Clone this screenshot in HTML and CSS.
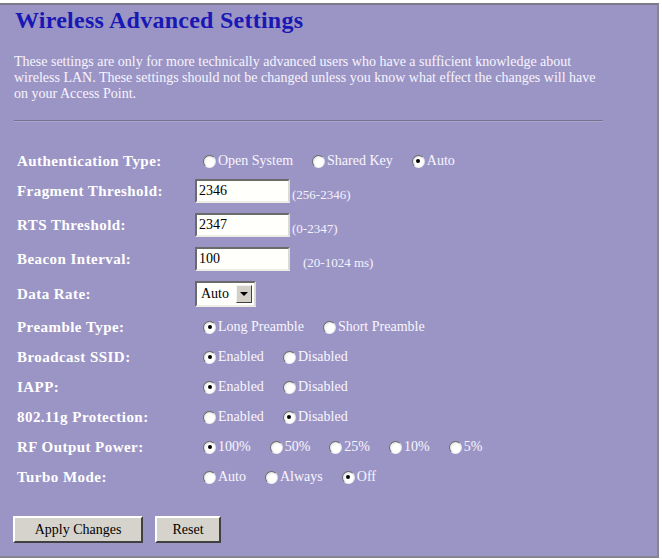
FILE: index.html
```html
<!DOCTYPE html>
<html>
<head>
<meta charset="utf-8">
<link rel="stylesheet" href="styles.css">
</head>
<body>
<div class="panel">
  <h1 class="title">Wireless Advanced Settings</h1>
  <p class="intro">These settings are only for more technically advanced users who have a sufficient knowledge about<br>wireless LAN. These settings should not be changed unless you know what effect the changes will have<br>on your Access Point.</p>
  <hr class="rule">
  <div class="form">
    <div class="row r-auth">
      <div class="label">Authentication Type:</div>
      <div class="value radios">
        <span class="opt"><span class="radio"></span>Open System</span>
        <span class="opt"><span class="radio"></span>Shared Key</span>
        <span class="opt"><span class="radio on"></span>Auto</span>
      </div>
    </div>
    <div class="row r-input">
      <div class="label">Fragment Threshold:</div>
      <div class="value inputs"><span class="field">2346</span><span class="hint">(256-2346)</span></div>
    </div>
    <div class="row r-input">
      <div class="label">RTS Threshold:</div>
      <div class="value inputs"><span class="field">2347</span><span class="hint">(0-2347)</span></div>
    </div>
    <div class="row r-input">
      <div class="label">Beacon Interval:</div>
      <div class="value inputs"><span class="field">100</span><span class="hint spaced">(20-1024 ms)</span></div>
    </div>
    <div class="row r-select">
      <div class="label">Data Rate:</div>
      <div class="value"><span class="select"><span class="sel-text">Auto</span><span class="sel-btn"><span class="arrow"></span></span></span></div>
    </div>
    <div class="row">
      <div class="label">Preamble Type:</div>
      <div class="value radios">
        <span class="opt"><span class="radio on"></span>Long Preamble</span>
        <span class="opt"><span class="radio"></span>Short Preamble</span>
      </div>
    </div>
    <div class="row">
      <div class="label">Broadcast SSID:</div>
      <div class="value radios">
        <span class="opt"><span class="radio on"></span>Enabled</span>
        <span class="opt"><span class="radio"></span>Disabled</span>
      </div>
    </div>
    <div class="row">
      <div class="label">IAPP:</div>
      <div class="value radios">
        <span class="opt"><span class="radio on"></span>Enabled</span>
        <span class="opt"><span class="radio"></span>Disabled</span>
      </div>
    </div>
    <div class="row">
      <div class="label">802.11g Protection:</div>
      <div class="value radios">
        <span class="opt"><span class="radio"></span>Enabled</span>
        <span class="opt"><span class="radio on"></span>Disabled</span>
      </div>
    </div>
    <div class="row">
      <div class="label">RF Output Power:</div>
      <div class="value radios">
        <span class="opt"><span class="radio on"></span>100%</span>
        <span class="opt"><span class="radio"></span>50%</span>
        <span class="opt"><span class="radio"></span>25%</span>
        <span class="opt"><span class="radio"></span>10%</span>
        <span class="opt"><span class="radio"></span>5%</span>
      </div>
    </div>
    <div class="row">
      <div class="label">Turbo Mode:</div>
      <div class="value radios">
        <span class="opt"><span class="radio"></span>Auto</span>
        <span class="opt"><span class="radio"></span>Always</span>
        <span class="opt"><span class="radio on"></span>Off</span>
      </div>
    </div>
  </div>
  <div class="buttons">
    <span class="btn apply">Apply Changes</span>
    <span class="btn reset">Reset</span>
  </div>
</div>
</body>
</html>
```
FILE: styles.css
```css
html, body {
  margin: 0;
  padding: 0;
  background: #ffffff;
}
body {
  font-family: "Liberation Serif", "Times New Roman", serif;
}
.panel {
  margin-top: 3px;
  width: 643px;
  height: 551px;
  padding-left: 14px;
  background: #9b95c5;
  border-top: 2px solid #7c7a86;
  border-right: 2px solid #86848e;
  border-bottom: 2px solid #86848e;
}
.title {
  margin: 1px 0 0 1px;
  font-size: 24px;
  line-height: 28px;
  font-weight: bold;
  letter-spacing: 0.25px;
  color: #1a18b4;
}
.intro {
  margin: 20px 0 0 0;
  font-size: 14px;
  line-height: 16px;
  color: #f6f4ff;
}
.rule {
  margin: 18px 0 0 0;
  width: 589px;
  height: 0;
  border: 0;
  border-top: 1px solid #76728f;
  border-bottom: 1px solid #aaa6cf;
}
.form {
  margin-top: 26px;
}
.row {
  display: flex;
  align-items: center;
  height: 30px;
}
.r-auth {
  height: 26px;
}
.r-input {
  height: 34px;
}
.r-select {
  height: 36px;
}
.label {
  width: 178px;
  padding-left: 3px;
  font-size: 15px;
  font-weight: bold;
  letter-spacing: 0.45px;
  color: #ffffff;
  white-space: nowrap;
}
.value {
  display: flex;
  align-items: center;
  font-size: 14px;
  color: #f8f6ff;
}
.radios {
  padding-left: 8px;
}
.opt {
  display: inline-flex;
  align-items: center;
  margin-right: 19px;
  white-space: nowrap;
}
.radio {
  position: relative;
  display: inline-block;
  box-sizing: border-box;
  width: 13px;
  height: 13px;
  margin-right: 2px;
  border-radius: 50%;
  border: 1px solid;
  border-color: #6c6c6c #e4e4e4 #f4f4f4 #6c6c6c;
  background: radial-gradient(circle at 60% 60%, #ffffff 40%, #e2e2e2 80%);
}
.radio.on::after {
  content: "";
  position: absolute;
  left: 3.5px;
  top: 3.5px;
  width: 4px;
  height: 4px;
  border-radius: 50%;
  background: #000000;
}
.inputs {
  align-items: flex-end;
}
.field {
  display: block;
  box-sizing: border-box;
  width: 95px;
  height: 24px;
  padding: 1px 0 0 2px;
  font-size: 14px;
  line-height: 18px;
  color: #000000;
  background: #fffffb;
  border: 2px solid;
  border-color: #6a6a6a #dcdad4 #eeece6 #6a6a6a;
}
.hint {
  display: block;
  margin-left: 2px;
  font-size: 13px;
  line-height: 16px;
  color: #f4f2ff;
}
.hint.spaced {
  margin-left: 13px;
}
.select {
  display: flex;
  align-items: center;
  box-sizing: border-box;
  width: 61px;
  height: 26px;
  padding: 2px;
  background: #fffffb;
  border: 2px solid;
  border-color: #6a6a6a #dcdad4 #eeece6 #6a6a6a;
}
.sel-text {
  flex: 1;
  padding-left: 2px;
  font-size: 14px;
  color: #000000;
}
.sel-btn {
  display: flex;
  align-items: center;
  justify-content: center;
  box-sizing: border-box;
  width: 16px;
  height: 18px;
  background: #d4d0c8;
  border: 1px solid;
  border-color: #f4f4f4 #404040 #404040 #f4f4f4;
}
.arrow {
  width: 0;
  height: 0;
  border-left: 4px solid transparent;
  border-right: 4px solid transparent;
  border-top: 4px solid #000000;
}
.buttons {
  display: flex;
  gap: 12px;
  margin-top: 24px;
  margin-left: -1px;
}
.btn {
  display: flex;
  align-items: center;
  justify-content: center;
  box-sizing: border-box;
  height: 27px;
  font-size: 14px;
  color: #000000;
  background: #d6d3cd;
  border: 2px solid;
  border-color: #ffffff #404040 #404040 #ffffff;
}
.apply {
  width: 130px;
}
.reset {
  width: 66px;
}
```
